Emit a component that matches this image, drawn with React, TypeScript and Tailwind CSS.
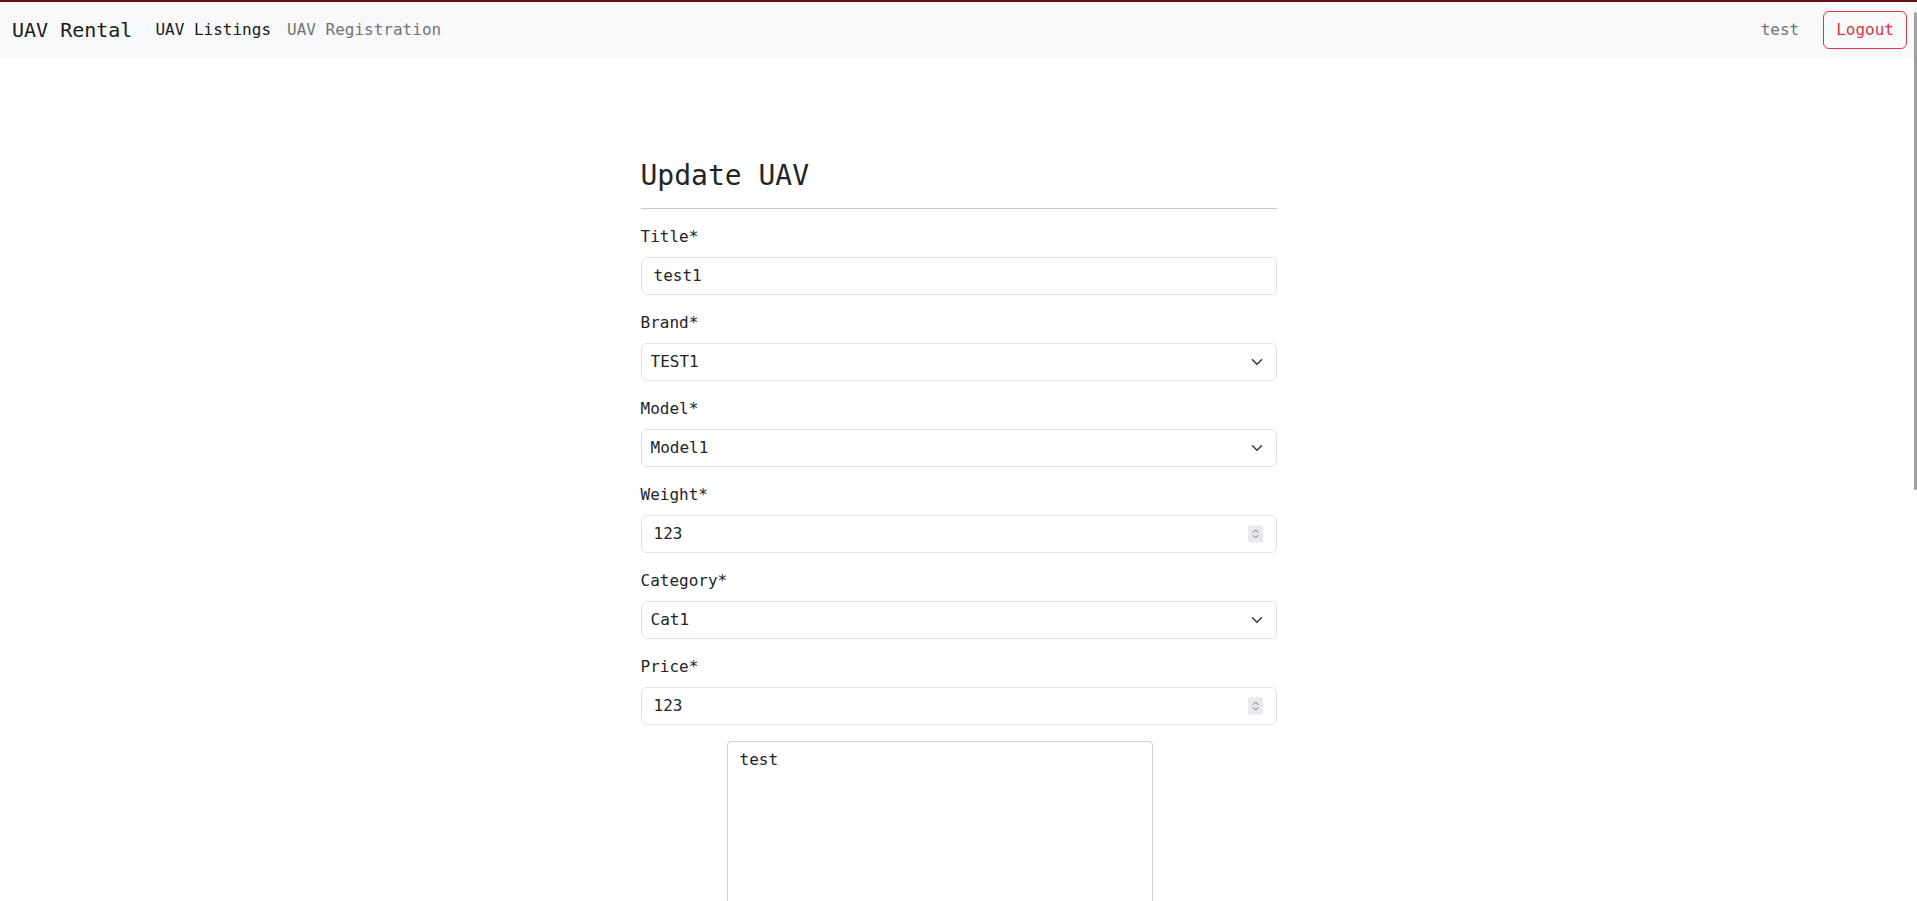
import { useState } from "react";

const FONT = "font-['DejaVu_Sans_Mono','Liberation_Mono',monospace]";

// Bootstrap-ish select chevron
function Chevron() {
  return (
    <svg
      className="pointer-events-none absolute right-[12px] top-1/2 h-[12px] w-[16px] -translate-y-1/2"
      viewBox="0 0 16 16"
      fill="none"
      stroke="#343a40"
      strokeWidth="2"
      strokeLinecap="round"
      strokeLinejoin="round"
    >
      <path d="m2 5 6 6 6-6" />
    </svg>
  );
}

// number spinner look-alike
function Spinner() {
  return (
    <div className="pointer-events-none absolute right-[14px] top-1/2 flex h-[17px] w-[15px] -translate-y-1/2 items-center justify-center rounded-[2px] bg-[#e9e9ed]">
      <svg viewBox="0 0 15 17" className="h-[17px] w-[15px]" fill="none" stroke="#757575" strokeWidth="1" strokeLinecap="round">
        <path d="M5 7 7.5 4.5 10 7" />
        <path d="M5 10 7.5 12.5 10 10" />
      </svg>
    </div>
  );
}

type Field = {
  label: string;
  value: string;
  kind: "text" | "select" | "number";
  options?: string[];
};

const fields: Field[] = [
  { label: "Title*", value: "test1", kind: "text" },
  { label: "Brand*", value: "TEST1", kind: "select", options: ["TEST1"] },
  { label: "Model*", value: "Model1", kind: "select", options: ["Model1"] },
  { label: "Weight*", value: "123", kind: "number" },
  { label: "Category*", value: "Cat1", kind: "select", options: ["Cat1"] },
  { label: "Price*", value: "123", kind: "number" },
];

const inputCls =
  "block h-[38px] w-full rounded-[6px] border border-[#dee2e6] bg-white text-[16px] leading-[24px] text-[#212529] outline-none";

function FormField({ field }: { field: Field }) {
  return (
    <div className="mb-[16px]">
      <label className="mb-[8px] block text-[16px] leading-[24px] text-[#212529]">{field.label}</label>
      <div className="relative">
        {field.kind === "select" ? (
          <>
            <select defaultValue={field.value} className={`${inputCls} appearance-none pl-[9px] pr-[36px] ${FONT}`}>
              {field.options?.map((o) => (
                <option key={o}>{o}</option>
              ))}
            </select>
            <Chevron />
          </>
        ) : (
          <>
            <input type="text" defaultValue={field.value} className={`${inputCls} px-[12px] ${FONT}`} />
            {field.kind === "number" && <Spinner />}
          </>
        )}
      </div>
    </div>
  );
}

export default function App() {
  const [user] = useState("test");

  return (
    <div className={`relative h-screen overflow-hidden bg-white ${FONT}`}>
      <nav className="flex items-center border-t-2 border-[#640d16] bg-[#f8f9fa] py-[8px] pl-[12px] pr-[10px]">
        <a className="mr-[15px] py-[5px] text-[20px] leading-[30px] text-[#1a1a1a]">UAV Rental</a>
        <a className="px-[8px] py-[8px] text-[16px] leading-[24px] text-[#1a1a1a]">UAV Listings</a>
        <a className="px-[8px] py-[8px] text-[16px] leading-[24px] text-[#737475]">UAV Registration</a>
        <div className="ml-auto flex items-center">
          <span className="mr-[24px] text-[16px] leading-[24px] text-[#737475]">{user}</span>
          <button className="h-[38px] rounded-[6px] border border-[#dc3545] px-[12px] text-[16px] leading-[24px] text-[#dc3545]">
            Logout
          </button>
        </div>
      </nav>

      <main className="mx-auto w-[636px] pt-[101px]">
        <h3 className="mb-[15px] text-[28px] leading-[1.2] text-[#212529]">Update UAV</h3>
        <hr className="mb-[16px] border-t border-[#c8c9ca]" />
        {fields.map((f) => (
          <FormField key={f.label} field={f} />
        ))}
        <textarea
          defaultValue="test"
          className={`ml-[86px] block h-[300px] w-[426px] resize-none rounded-[4px] border border-[#ced4da] px-[12px] py-[6px] text-[16px] leading-[24px] text-[#212529] outline-none ${FONT}`}
        />
      </main>

      {/* overlay scrollbar thumb */}
      <div className="absolute right-0 top-[12px] h-[478px] w-[3px] rounded-full bg-[#a0a0a0]" />
    </div>
  );
}
